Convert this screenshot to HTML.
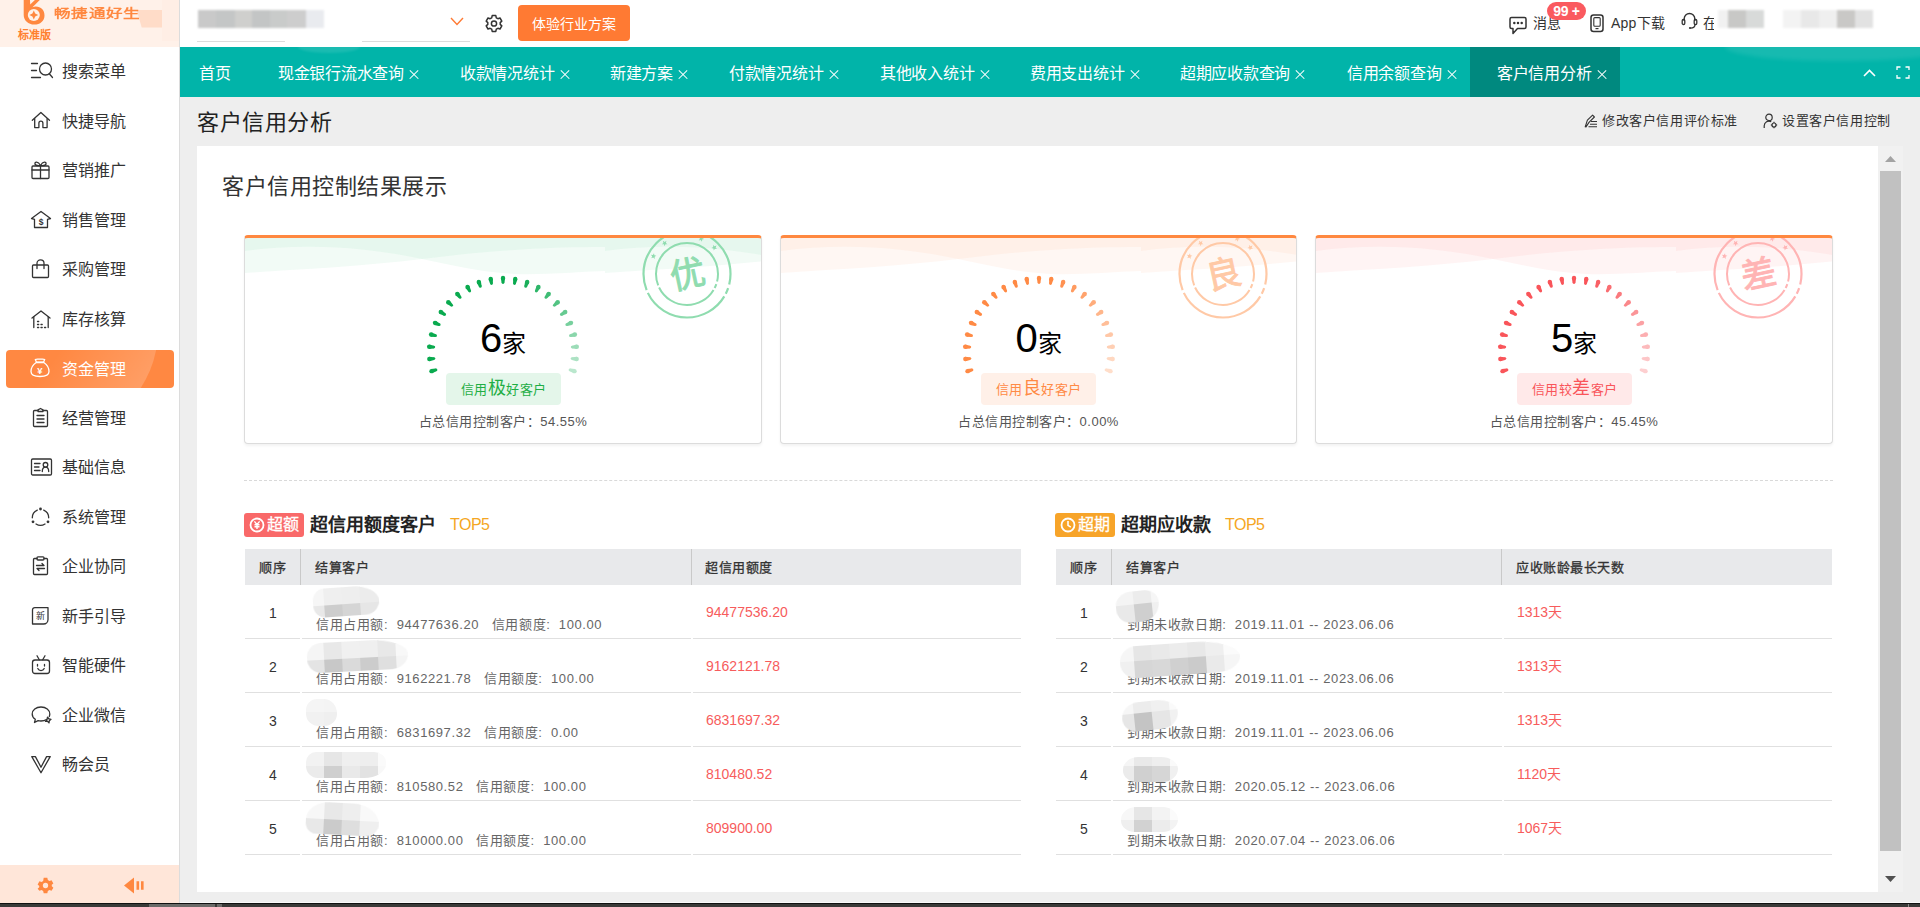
<!DOCTYPE html>
<html lang="zh-CN">
<head>
<meta charset="utf-8">
<title>客户信用分析</title>
<style>
*{box-sizing:border-box;margin:0;padding:0}
html,body{width:1920px;height:907px;overflow:hidden;background:#eeeeee}
body{font-family:"Liberation Sans",sans-serif;font-size:14px;color:#333;position:relative}
.abs{position:absolute}
svg{display:block;overflow:visible}
/* sidebar */
#side{position:absolute;left:0;top:0;width:180px;height:903px;background:#fff;border-right:1px solid #dcdcdc}
#logo{position:absolute;left:0;top:0;width:179px;height:47px;background:#fff1e9;overflow:hidden}
.mi{position:absolute;left:0;width:179px;height:38px}
.mi .ic{position:absolute;left:30px;top:8px;width:22px;height:22px}
.mi .tx{position:absolute;left:62px;top:0;line-height:40px;font-size:16px;color:#333;white-space:nowrap}
.mi.on{left:6px;width:168px;border-radius:4px;background:#ff8842;overflow:hidden}
.mi.on:before{content:"";position:absolute;left:-60px;top:-126px;width:212px;height:212px;border-radius:50%;background:linear-gradient(125deg,rgba(255,255,255,0) 56%,rgba(255,255,255,.21) 90%)}
.mi.on .ic{left:23px;top:7px}
.mi.on .tx{left:56px;color:#fff}
#sfoot{position:absolute;left:0;top:865px;width:179px;height:38px;background:#ffe6d9}
/* header */
#head{position:absolute;left:180px;top:0;width:1740px;height:47px;background:#fff}
#tabs{position:absolute;left:180px;top:47px;width:1740px;height:50px;background:#01b4a9}
.tab{position:absolute;top:0;height:50px;line-height:53px;letter-spacing:-.3px;font-size:16px;color:#fff;white-space:nowrap}
.tab i{position:absolute;top:23px;width:9px;height:9px}
.tab i:before,.tab i:after{content:"";position:absolute;left:-1.5px;top:4px;width:12px;height:1.2px;background:#fff;transform:rotate(45deg)}
.tab i:after{transform:rotate(-45deg)}
.tabon{position:absolute;left:1290px;top:0;width:150px;height:50px;background:#00897f}

#panel{position:absolute;left:197px;top:146px;width:1681px;height:746px;background:#fff}
#sbar{position:absolute;left:1878px;top:146px;width:25px;height:746px;background:#f1f1f1}
#sbar b{position:absolute;left:2px;top:25px;width:21px;height:680px;background:#c1c1c1}
.card{position:absolute;top:89px;height:209px;border:1px solid #dcdcdc;border-top:3px solid #ff8840;border-radius:4px;background:#fff;overflow:hidden;box-shadow:0 2px 3px rgba(0,0,0,.05)}
.card .wave{position:absolute;left:0;top:0;width:100%;height:40px}
.card .num{position:absolute;left:0;width:100%;top:76px;text-align:center;line-height:48px;color:#000;font-size:40px;white-space:nowrap}
.card .num span{font-size:24px}
.card .pill{position:absolute;top:135px;height:32px;width:115px;border-radius:4px;text-align:center;line-height:33px;font-size:13px;letter-spacing:.5px;white-space:nowrap}
.card .pill span{font-size:18px;line-height:20px}
.card .pct{position:absolute;left:0;width:100%;top:174px;text-align:center;font-size:13px;letter-spacing:.5px;line-height:20px;color:#555;white-space:nowrap}
.stamp{position:absolute;top:-12px;width:96px;height:96px}
.sec{position:absolute;top:367px;height:24px}
.badge{position:absolute;left:0;top:0;width:60px;height:24px;border-radius:3px;color:#fff;font-size:16px;line-height:24px;white-space:nowrap}
.badge span{position:absolute;left:23px;top:0;-webkit-text-stroke:.3px #fff}
.sec h3{position:absolute;left:66px;top:-2px;font-size:18px;line-height:28px;font-weight:bold;color:#222;white-space:nowrap}
.sec em{position:absolute;top:0;font-style:normal;letter-spacing:-.5px;font-size:16px;line-height:24px;color:#f5a623;white-space:nowrap}
.tbl{position:absolute;top:403px;width:776px;height:310px}
.th{position:absolute;left:0;top:0;width:100%;height:36px;background:#e8e9eb}
.th span{position:absolute;top:0;line-height:38px;font-size:13px;letter-spacing:.5px;font-weight:normal;-webkit-text-stroke:.3px #333;color:#333;white-space:nowrap}
.th i{position:absolute;top:0;width:1px;height:36px;background:#c9c9c9}
.tr{position:absolute;left:0;width:100%;height:54px;border-bottom:1px solid #e0e0e0}
.tr .gap{position:absolute;bottom:-1px;width:2px;height:1px;background:#fff}
.tr .no{position:absolute;left:0;width:56px;top:18px;text-align:center;font-size:14px;line-height:20px;color:#333}
.tr .sub{position:absolute;top:30px;font-size:13px;letter-spacing:.6px;line-height:20px;color:#666;white-space:pre}
.tr .val{position:absolute;top:17px;font-size:14px;line-height:20px;color:#f75c5c;white-space:nowrap}
.mz{position:absolute;overflow:hidden;filter:blur(.6px)}
.mz i{position:absolute;display:block}
#botbar{position:absolute;left:0;top:903px;width:1920px;height:4px;background:#3a3a38;border-top:1px solid #111}
#botbar b{position:absolute;top:0;height:3px;background:#6b6b69}
</style>
</head>
<body>
<!--SIDEBAR-->
<div id="side">
 <div id="logo"><div class="abs" style="left:162px;top:0;width:17px;height:41px;background:#ffeee5"></div>
<svg class="abs" style="left:136px;top:10px" width="27" height="18" viewBox="0 0 27 18"><path d="M.7 0H26V17.600H5.700z" fill="#ffdcc8"/></svg>
<svg class="abs" style="left:22px;top:-2px" width="24" height="28" viewBox="0 0 24 28"><path d="M1.700 0h6.200l.3 6.500L15 0h4.800L10.500 9.200c1-.4 2.200-.6 3.300-.6 5.300 0 8.700 3.900 8.700 8.800 0 5.200-4.200 9.200-10.200 9.200S1.700 22.500 1.700 17z" fill="#ff8840"/><circle cx="11.800" cy="17" r="6" fill="#fff1e9"/><path d="M11.800 12.600l1.400 3 3 1.400-3 1.400-1.400 3-1.400-3-3-1.400 3-1.400z" fill="#ff8840"/></svg>
<div class="abs" style="left:54px;top:4px;font-size:12px;line-height:20px;font-weight:bold;color:#ff8840;white-space:nowrap;letter-spacing:.5px;transform:scale(1.38,1);transform-origin:0 50%">畅捷通好生</div>
<div class="abs" style="left:18px;top:27px;font-size:11px;line-height:16px;font-weight:bold;color:#ff8030;white-space:nowrap">标准版</div></div>
 <div class="mi" style="top:52px"><svg class="ic" viewBox="0 0 22 22" style="color:#333"><path d="M1.5 3.5h6M1.5 10.5h5M1.5 17.5h9" fill="none" stroke="currentColor" stroke-width="1.3" stroke-linejoin="round" stroke-linecap="round" stroke-width="1.5"/><circle cx="15.5" cy="9" r="6" fill="none" stroke="currentColor" stroke-width="1.3" stroke-linejoin="round" stroke-linecap="round" stroke-width="1.5"/><path d="M19.5 14l3 3.5" fill="none" stroke="currentColor" stroke-width="1.3" stroke-linejoin="round" stroke-linecap="round" stroke-width="1.5"/></svg><div class="tx">搜索菜单</div></div>
<div class="mi" style="top:102px"><svg class="ic" viewBox="0 0 22 22" style="color:#333"><path d="M2.300 10.200L10.900 2.400l8.600 7.800" fill="none" stroke="currentColor" stroke-width="1.3" stroke-linejoin="round" stroke-linecap="round"/><path d="M4.700 8.600v9h4.200v-4.400a2 2 0 0 1 4 0v4.400h4.200v-9" fill="none" stroke="currentColor" stroke-width="1.3" stroke-linejoin="round" stroke-linecap="round"/></svg><div class="tx">快捷导航</div></div>
<div class="mi" style="top:151px"><svg class="ic" viewBox="0 0 22 22" style="color:#333"><rect x="2" y="7" width="17" height="12.5" rx="1" fill="none" stroke="currentColor" stroke-width="1.3" stroke-linejoin="round" stroke-linecap="round"/><path d="M2 11h17M10.5 7v12.5" fill="none" stroke="currentColor" stroke-width="1.3" stroke-linejoin="round" stroke-linecap="round"/><path d="M10.5 6.5C8 2 4.5 2.5 5 5c.3 1.5 3 1.800 5.5 1.500zM10.500 6.500C13 2 16.500 2.500 16 5c-.3 1.500-3 1.800-5.500 1.500z" fill="none" stroke="currentColor" stroke-width="1.3" stroke-linejoin="round" stroke-linecap="round"/></svg><div class="tx">营销推广</div></div>
<div class="mi" style="top:201px"><svg class="ic" viewBox="0 0 22 22" style="color:#333"><path d="M1.500 9.500L11 2.500l9.500 7-3 .8v8.200H4.500v-8.200z" fill="none" stroke="currentColor" stroke-width="1.3" stroke-linejoin="round" stroke-linecap="round"/><text x="11" y="15.500" font-size="8.500" font-weight="bold" text-anchor="middle" fill="currentColor" font-family="Liberation Sans, sans-serif">$</text></svg><div class="tx">销售管理</div></div>
<div class="mi" style="top:250px"><svg class="ic" viewBox="0 0 22 22" style="color:#333"><rect x="2.500" y="7" width="16" height="12.500" rx="1" fill="none" stroke="currentColor" stroke-width="1.3" stroke-linejoin="round" stroke-linecap="round"/><path d="M7 10.500V5.200a3.500 3.300 0 0 1 7 0v5.300" fill="none" stroke="currentColor" stroke-width="1.3" stroke-linejoin="round" stroke-linecap="round"/></svg><div class="tx">采购管理</div></div>
<div class="mi" style="top:300px"><svg class="ic" viewBox="0 0 22 22" style="color:#333"><path d="M2 10L11 3l9 7" fill="none" stroke="currentColor" stroke-width="1.3" stroke-linejoin="round" stroke-linecap="round"/><path d="M3.800 9v10.500M18.200 9v10.500" fill="none" stroke="currentColor" stroke-width="1.3" stroke-linejoin="round" stroke-linecap="round"/><path d="M7.500 13.500h1.200M7.500 16.500h1.200M11 16.500h1.200M7.500 19.500h1.200M11 19.500h1.200M14.500 19.500h1.200" fill="none" stroke="currentColor" stroke-width="1.3" stroke-linejoin="round" stroke-linecap="round" stroke-width="1.600"/></svg><div class="tx">库存核算</div></div>
<div class="mi on" style="top:350px"><svg class="ic" viewBox="0 0 22 22" style="color:#fff"><path d="M7.200 5.500C3.500 8 2 11.500 2 14.500c0 3 2.500 5 9 5s9-2 9-5c0-3-1.500-6.500-5.200-9z" fill="none" stroke="currentColor" stroke-width="1.3" stroke-linejoin="round" stroke-linecap="round" stroke-width="1.500"/><path d="M7.500 5.200L6.300 2.500c1.500-.8 3-.3 4.700-.3s3.200-.5 4.700.3l-1.200 2.700z" fill="none" stroke="currentColor" stroke-width="1.3" stroke-linejoin="round" stroke-linecap="round" stroke-width="1.500"/><text x="11" y="17" font-size="9.5" font-weight="bold" text-anchor="middle" fill="currentColor" font-family="Liberation Sans, sans-serif">¥</text></svg><div class="tx">资金管理</div></div>
<div class="mi" style="top:399px"><svg class="ic" viewBox="0 0 22 22" style="color:#333"><path d="M8 3.500H4.500a1 1 0 0 0-1 1v14a1 1 0 0 0 1 1h12a1 1 0 0 0 1-1v-14a1 1 0 0 0-1-1H13" fill="none" stroke="currentColor" stroke-width="1.3" stroke-linejoin="round" stroke-linecap="round"/><path d="M8 4.500V2.800l2.500-1.300L13 2.800v1.700z" fill="none" stroke="currentColor" stroke-width="1.3" stroke-linejoin="round" stroke-linecap="round"/><path d="M7 8.500h7M7 12h7M7 15.500h7" fill="none" stroke="currentColor" stroke-width="1.3" stroke-linejoin="round" stroke-linecap="round"/></svg><div class="tx">经营管理</div></div>
<div class="mi" style="top:448px"><svg class="ic" viewBox="0 0 22 22" style="color:#333"><rect x="1.500" y="3" width="20" height="16" rx="1.200" fill="none" stroke="currentColor" stroke-width="1.3" stroke-linejoin="round" stroke-linecap="round"/><path d="M4.500 7.500h5.500M4.500 11h4.500M4.500 14.500h5.500" fill="none" stroke="currentColor" stroke-width="1.3" stroke-linejoin="round" stroke-linecap="round"/><circle cx="15.500" cy="8.800" r="2.300" fill="none" stroke="currentColor" stroke-width="1.3" stroke-linejoin="round" stroke-linecap="round"/><path d="M12.300 15.500c0-3 1.400-4.300 3.200-4.300s3.200 1.300 3.200 4.300" fill="none" stroke="currentColor" stroke-width="1.3" stroke-linejoin="round" stroke-linecap="round"/></svg><div class="tx">基础信息</div></div>
<div class="mi" style="top:498px"><svg class="ic" viewBox="0 0 22 22" style="color:#333"><path d="M7.300 4.100A8.300 8.300 0 0 0 2.300 11.800M18.700 11.800a8.300 8.300 0 0 0-5-7.700M6 18a8.300 8.300 0 0 0 9 0" fill="none" stroke="currentColor" stroke-width="1.3" stroke-linejoin="round" stroke-linecap="round"/><circle cx="10.500" cy="3" r="1.400" fill="currentColor"/><circle cx="3" cy="15.800" r="1.400" fill="currentColor"/><circle cx="18" cy="15.800" r="1.400" fill="currentColor"/></svg><div class="tx">系统管理</div></div>
<div class="mi" style="top:547px"><svg class="ic" viewBox="0 0 22 22" style="color:#333"><path d="M7 3.500H4.500a1 1 0 0 0-1 1v14a1 1 0 0 0 1 1h12a1 1 0 0 0 1-1v-14a1 1 0 0 0-1-1H14" fill="none" stroke="currentColor" stroke-width="1.3" stroke-linejoin="round" stroke-linecap="round"/><rect x="7" y="1.800" width="7" height="3.200" rx="1" fill="none" stroke="currentColor" stroke-width="1.3" stroke-linejoin="round" stroke-linecap="round"/><path d="M6.500 10.500h7.500M14.500 13.500H7M12 8.500l2 2M9 15.500l-2-2" fill="none" stroke="currentColor" stroke-width="1.3" stroke-linejoin="round" stroke-linecap="round"/></svg><div class="tx">企业协同</div></div>
<div class="mi" style="top:597px"><svg class="ic" viewBox="0 0 22 22" style="color:#333"><path d="M4.800 2.600h13.200V14.500a4.500 4.500 0 0 1-4.500 4.500H2.500V4.900a2.300 2.300 0 0 1 2.300-2.300z" fill="none" stroke="currentColor" stroke-width="1.3" stroke-linejoin="round" stroke-linecap="round" stroke-width="1.100"/><text x="10.300" y="14.200" font-size="9" text-anchor="middle" fill="currentColor" font-family="Liberation Sans, sans-serif">新</text></svg><div class="tx">新手引导</div></div>
<div class="mi" style="top:646px"><svg class="ic" viewBox="0 0 22 22" style="color:#333"><rect x="2.500" y="6" width="17" height="13.500" rx="2.500" fill="none" stroke="currentColor" stroke-width="1.3" stroke-linejoin="round" stroke-linecap="round"/><path d="M7 1.800l2.300 4M15 1.800l-2.300 4" fill="none" stroke="currentColor" stroke-width="1.3" stroke-linejoin="round" stroke-linecap="round"/><path d="M7.500 10.500v1.500M14.500 10.500v1.500" fill="none" stroke="currentColor" stroke-width="1.3" stroke-linejoin="round" stroke-linecap="round" stroke-width="1.500"/><path d="M7.800 14.500a3.500 3.500 0 0 0 6.400 0" fill="none" stroke="currentColor" stroke-width="1.3" stroke-linejoin="round" stroke-linecap="round"/></svg><div class="tx">智能硬件</div></div>
<div class="mi" style="top:696px"><svg class="ic" viewBox="0 0 22 22" style="color:#333"><path d="M16.500 15.500c-1.500 1-3.300 1.500-5.500 1.500-1 0-2-.1-2.900-.4L4.500 18.500l.8-3.200C3.300 14 2.200 12.200 2.200 10 2.200 6 6 3 11 3s8.800 3 8.800 7c0 .9-.2 1.700-.5 2.500" fill="none" stroke="currentColor" stroke-width="1.3" stroke-linejoin="round" stroke-linecap="round"/><path d="M17.500 13.200l1.600 1.800 1.900.3-1.700 1.500-.3 2-1.500-1.600-2 .2 1.500-1.800z" fill="none" stroke="currentColor" stroke-width="1.3" stroke-linejoin="round" stroke-linecap="round" stroke-width="1.100"/></svg><div class="tx">企业微信</div></div>
<div class="mi" style="top:745px"><svg class="ic" viewBox="0 0 22 22" style="color:#333"><path d="M1.800 3.600h3.600M16.600 3.600h3.600M1.800 3.600L11 19.800 20.200 3.600M5.400 3.600L11 14.200 16.600 3.600" fill="none" stroke="currentColor" stroke-width="1.3" stroke-linejoin="round" stroke-linecap="round" stroke-width="1.200"/></svg><div class="tx">畅会员</div></div>

 <div id="sfoot"><svg class="abs" style="left:36.500px;top:12px" width="17" height="17" viewBox="0 0 16 16"><path d="M6.300 .8h3.400l.5 2 1.500.9 2-.6 1.700 2.900-1.500 1.400v1.200l1.500 1.400-1.700 2.900-2-.6-1.500.9-.5 2H6.300l-.5-2-1.500-.9-2 .6L.6 11.100l1.500-1.400V8.500L.6 7l1.700-2.900 2 .6 1.500-.9z" fill="#ff8840"/><circle cx="8" cy="8" r="2.500" fill="#ffe6d9"/></svg>
<svg class="abs" style="left:123px;top:12px" width="22" height="17" viewBox="0 0 22 16" preserveAspectRatio="none"><path d="M1 8L11 .5v15z" fill="#ff8840"/><rect x="13.500" y="4" width="2.600" height="8" fill="#ff8840"/><rect x="18" y="4" width="2.600" height="8" fill="#ff8840"/></svg></div>
</div>
<!--HEADER-->
<div id="head">
 <!-- blurred company name -->
 <div class="abs" style="left:18px;top:10px;width:126px;height:18px;filter:blur(1.2px);background:linear-gradient(90deg,#c9c9c9 0,#c9c9c9 14%,#c4c6c6 14%,#c4c6c6 29%,#cfcfcd 29%,#cfcfcd 43%,#c3c5c5 43%,#c3c5c5 57%,#c9cbca 57%,#c9cbca 71%,#cdcdcd 71%,#cdcdcd 86%,#e9ebef 86%,#e9ebef 100%)"></div>
 <div class="abs" style="left:17px;top:41px;width:88px;height:1px;background:#dcdcdc"></div>
 <div class="abs" style="left:182px;top:41px;width:108px;height:1px;background:#dcdcdc"></div>
 <svg class="abs" style="left:270px;top:17px" width="14" height="9" viewBox="0 0 14 9"><path d="M1 1 L7 7.5 L13 1" fill="none" stroke="#ff7a33" stroke-width="1.4"/></svg>
 <svg class="abs" style="left:304px;top:14px" width="20" height="20" viewBox="0 0 20 20"><path d="M8.2 1.6h3.6l.5 2.2 1.6.9 2.1-.7 1.8 3.1-1.6 1.5v1.8l1.6 1.5-1.8 3.1-2.1-.7-1.6.9-.5 2.2H8.2l-.5-2.2-1.6-.9-2.1.7-1.8-3.1 1.6-1.5V8.6L2.2 7.1 4 4l2.1.7 1.6-.9z" fill="none" stroke="#333" stroke-width="1.5" stroke-linejoin="round"/><circle cx="10" cy="9.5" r="2.6" fill="none" stroke="#333" stroke-width="1.5"/></svg>
 <div class="abs" style="left:338px;top:5px;width:112px;height:36px;border-radius:4px;background:#ff7a33;color:#fff;font-size:14px;line-height:38px;text-align:center">体验行业方案</div>
 <!-- right -->
 <svg class="abs" style="left:1328px;top:14px" width="20" height="22" viewBox="0 0 20 22"><path d="M3.500 3.500h13a1.500 1.500 0 0 1 1.500 1.500v8a1.500 1.500 0 0 1-1.500 1.500H9.500L5 19.500V14.500H3.500A1.500 1.500 0 0 1 2 13V5a1.500 1.500 0 0 1 1.500-1.500z" fill="none" stroke="#333" stroke-width="1.500" stroke-linejoin="round"/><circle cx="6.300" cy="9" r="1.250" fill="#333"/><circle cx="10" cy="9" r="1.250" fill="#333"/><circle cx="13.700" cy="9" r="1.250" fill="#333"/></svg>
 <div class="abs" style="left:1353px;top:13px;font-size:14px;line-height:20px;color:#333">消息</div>
 <div class="abs" style="left:1367px;top:2px;width:39px;height:18px;border-radius:9px;background:#fa5a5f;color:#fff;font-size:14px;letter-spacing:-.3px;font-weight:bold;line-height:18px;text-align:center">99 +</div>
 <svg class="abs" style="left:1410px;top:14px" width="14" height="19" viewBox="0 0 14 19"><rect x="1" y="1" width="12" height="16.500" rx="2.500" fill="none" stroke="#333" stroke-width="1.500"/><rect x="3.800" y="3.600" width="6.400" height="8.600" rx="1" fill="none" stroke="#333" stroke-width="1.100"/><path d="M5.500 14.600h3" stroke="#333" stroke-width="1.200"/></svg>
 <div class="abs" style="left:1431px;top:13px;font-size:14px;line-height:20px;color:#333;letter-spacing:.2px">App下载</div>
 <svg class="abs" style="left:1501px;top:12px" width="17" height="18" viewBox="0 0 17 18"><path d="M3.2 9V6.8a5.3 5.3 0 0 1 10.6 0V9" fill="none" stroke="#333" stroke-width="1.4"/><rect x="1.2" y="7.5" width="2.6" height="5" rx="1.2" fill="none" stroke="#333" stroke-width="1.3"/><rect x="13.2" y="7.5" width="2.6" height="5" rx="1.2" fill="none" stroke="#333" stroke-width="1.3"/><path d="M14 12.5c0 2.5-2 3.6-4.6 3.6" fill="none" stroke="#333" stroke-width="1.3"/><circle cx="9" cy="16" r="1.1" fill="#333"/></svg>
 <div class="abs" style="left:1523px;top:13px;font-size:14px;line-height:20px;color:#333">在</div>
 <!-- blurred user area -->
 <div class="abs" style="left:1534px;top:0;width:206px;height:47px;background:#fff"></div>
 <div class="abs" style="left:1538px;top:10px;width:46px;height:18px;filter:blur(1px);background:linear-gradient(90deg,#f1f1f1 0,#f1f1f1 22%,#c8c8c6 22%,#c8c8c6 61%,#d8dad9 61%,#d8dad9 100%)"></div>
 <div class="abs" style="left:1603px;top:10px;width:90px;height:18px;filter:blur(1px);background:linear-gradient(90deg,#f3f3f3 0,#f3f3f3 20%,#e8e8e8 20%,#e8e8e8 40%,#efefef 40%,#efefef 60%,#c9c8c6 60%,#c9c8c6 80%,#e2e2e2 80%,#e2e2e2 100%)"></div>
</div>
<div id="tabs">
 <div class="tabon"></div>
 <div class="abs" style="left:118px;top:-6px;width:62px;height:12px;border-radius:50%;background:rgba(255,255,255,.1);filter:blur(1px)"></div>
 <div class="abs" style="left:1545px;top:-14px;width:230px;height:28px;border-radius:50%;background:rgba(255,255,255,.09);filter:blur(2px)"></div>
 <div class="tab" style="left:19px">首页</div>
<div class="tab" style="left:98px">现金银行流水查询<i style="left:131px"></i></div>
<div class="tab" style="left:280px">收款情况统计<i style="left:100px"></i></div>
<div class="tab" style="left:430px">新建方案<i style="left:68px"></i></div>
<div class="tab" style="left:549px">付款情况统计<i style="left:100px"></i></div>
<div class="tab" style="left:700px">其他收入统计<i style="left:100px"></i></div>
<div class="tab" style="left:850px">费用支出统计<i style="left:100px"></i></div>
<div class="tab" style="left:1000px">超期应收款查询<i style="left:115px"></i></div>
<div class="tab" style="left:1167px">信用余额查询<i style="left:100px"></i></div>
<div class="tab" style="left:1317px">客户信用分析<i style="left:100px"></i></div>
<svg class="abs" style="left:1683px;top:22px" width="13" height="8" viewBox="0 0 13 8"><path d="M1 7 L6.5 1.5 L12 7" fill="none" stroke="#fff" stroke-width="1.6"/></svg>
<svg class="abs" style="left:1716px;top:19px" width="14" height="13" viewBox="0 0 14 13"><path d="M1 4V1h3.5M9.5 1H13v3M13 9v3H9.5M4.5 12H1V9" fill="none" stroke="#fff" stroke-width="1.3"/></svg>

</div>
<div class="abs" style="left:197px;top:107px;font-size:22px;letter-spacing:.5px;line-height:32px;color:#222;white-space:nowrap">客户信用分析</div>
<svg class="abs" style="left:1584px;top:114px" width="14" height="14" viewBox="0 0 14 14"><path d="M1.2 12.8 L3.4 6.2 L8.6 1.2 L10.4 3 L5 8.4 L2 12.9z" fill="none" stroke="#333" stroke-width="1.1" stroke-linejoin="round"/><path d="M7 7.5h6M6 10.2h7M4.5 12.8H13" stroke="#333" stroke-width="1.1"/></svg>
<div class="abs" style="left:1602px;top:111px;font-size:13px;letter-spacing:.6px;line-height:20px;color:#333;white-space:nowrap">修改客户信用评价标准</div>
<svg class="abs" style="left:1763px;top:113px" width="15" height="16" viewBox="0 0 15 16"><circle cx="6" cy="4.4" r="3.2" fill="none" stroke="#333" stroke-width="1.2"/><path d="M1.2 15v-2.2a4.8 4.8 0 0 1 7-4.2" fill="none" stroke="#333" stroke-width="1.2"/><circle cx="11" cy="12" r="2" fill="none" stroke="#333" stroke-width="1.2"/><path d="M11 8.8v1.2M11 14v1.2M7.8 12H9M13 12h1.2" stroke="#333" stroke-width="1.1"/></svg>
<div class="abs" style="left:1782px;top:111px;font-size:13px;letter-spacing:.6px;line-height:20px;color:#333;white-space:nowrap">设置客户信用控制</div>

<div id="panel">
<div class="abs" style="left:25px;top:25px;font-size:22px;letter-spacing:.5px;line-height:32px;color:#333;white-space:nowrap">客户信用控制结果展示</div>
<div class="card" style="left:47px;width:518px"><svg class="wave" preserveAspectRatio="none"><defs><pattern id="w2ebe64" width="360" height="40" patternUnits="userSpaceOnUse"><path d="M0,0H360V9C300,9 250,12 177,21C120,28 60,31 0,35Z" fill="#18b256" opacity=".056"/><path d="M0,0H360V33C330,34 300,37 270,36C235,34 205,27 177,21C120,9 60,5 0,13Z" fill="#18b256" opacity=".056"/></pattern></defs><rect width="100%" height="40" fill="url(#w2ebe64)"/></svg><svg class="stamp" style="left:394px" viewBox="0 0 96 96"><circle cx="48" cy="48" r="43.5" fill="none" stroke="#8fdcaf" stroke-width="2.2" stroke-dasharray="10.6 3.8 6.1 3 93.4 3 154"/><circle cx="48" cy="48" r="31" fill="none" stroke="#8fdcaf" stroke-width="2" stroke-dasharray="7.6 2.7 4.3 2.2 66.5 2.2 110"/><polygon points="11.8,28.8 13.9,29.0 15.0,27.2 15.4,29.3 17.4,29.7 15.6,30.8 15.8,32.9 14.2,31.4 12.3,32.2 13.2,30.3" fill="#8fdcaf"/><polygon points="23.9,14.8 25.7,16.0 27.4,14.8 26.9,16.9 28.5,18.2 26.4,18.3 25.7,20.3 24.9,18.3 22.8,18.2 24.4,16.9" fill="#8fdcaf"/><polygon points="63.4,10.0 63.3,12.1 65.2,13.0 63.2,13.6 63.0,15.7 61.7,14.0 59.7,14.4 60.9,12.7 59.9,10.8 61.9,11.5" fill="#8fdcaf"/><polygon points="77.5,19.5 76.6,21.4 78.0,23.0 75.9,22.8 74.8,24.6 74.4,22.5 72.4,22.0 74.2,21.0 74.0,18.9 75.6,20.3" fill="#8fdcaf"/><text x="48" y="61" text-anchor="middle" font-size="35" stroke-width=".9" paint-order="stroke" stroke="#8fdcaf" fill="#8fdcaf" transform="rotate(-12 48 48)" font-family="Liberation Sans, sans-serif">优</text></svg><svg class="abs" style="left:178px;top:34px" width="160" height="110" viewBox="0 0 160 110"><g opacity="0.28" fill="#0aaa4f"><polygon points="150.91,101.28 152.05,97.03 147.40,96.61 146.67,99.31"/><circle cx="151.48" cy="99.15" r="2.20"/><circle cx="147.04" cy="97.96" r="1.40"/></g><g opacity="0.33" fill="#0aaa4f"><polygon points="153.46,89.22 153.87,84.84 149.22,85.20 148.95,87.99"/><circle cx="153.66" cy="87.03" r="2.20"/><circle cx="149.09" cy="86.60" r="1.40"/></g><g opacity="0.40" fill="#0aaa4f"><polygon points="153.97,76.92 153.65,72.53 149.12,73.65 149.32,76.45"/><circle cx="153.81" cy="74.72" r="2.20"/><circle cx="149.22" cy="75.05" r="1.40"/></g><g opacity="0.47" fill="#0aaa4f"><polygon points="152.43,64.69 151.40,60.42 147.11,62.28 147.77,65.00"/><circle cx="151.91" cy="62.55" r="2.20"/><circle cx="147.44" cy="63.64" r="1.40"/></g><g opacity="0.55" fill="#0aaa4f"><polygon points="148.89,52.89 147.16,48.85 143.25,51.39 144.35,53.97"/><circle cx="148.03" cy="50.87" r="2.20"/><circle cx="143.80" cy="52.68" r="1.40"/></g><g opacity="0.62" fill="#0aaa4f"><polygon points="143.44,41.84 141.06,38.14 137.63,41.30 139.14,43.66"/><circle cx="142.25" cy="39.99" r="2.20"/><circle cx="138.38" cy="42.48" r="1.40"/></g><g opacity="0.70" fill="#0aaa4f"><polygon points="136.24,31.85 133.28,28.60 130.41,32.28 132.29,34.35"/><circle cx="134.76" cy="30.22" r="2.20"/><circle cx="131.35" cy="33.32" r="1.40"/></g><g opacity="0.78" fill="#0aaa4f"><polygon points="127.47,23.19 124.01,20.47 121.80,24.58 124.00,26.31"/><circle cx="125.74" cy="21.83" r="2.20"/><circle cx="122.90" cy="25.45" r="1.40"/></g><g opacity="0.85" fill="#0aaa4f"><polygon points="117.40,16.11 113.53,14.00 112.03,18.42 114.49,19.76"/><circle cx="115.46" cy="15.05" r="2.20"/><circle cx="113.26" cy="19.09" r="1.40"/></g><g opacity="0.93" fill="#0aaa4f"><polygon points="106.28,10.79 102.12,9.35 101.38,13.96 104.02,14.87"/><circle cx="104.20" cy="10.07" r="2.20"/><circle cx="102.70" cy="14.42" r="1.40"/></g><g opacity="1.00" fill="#0aaa4f"><polygon points="94.44,7.39 90.10,6.66 90.13,11.33 92.89,11.79"/><circle cx="92.27" cy="7.02" r="2.20"/><circle cx="91.51" cy="11.56" r="1.40"/></g><g opacity="1.00" fill="#0aaa4f"><polygon points="82.20,6.00 77.80,6.00 78.60,10.60 81.40,10.60"/><circle cx="80.00" cy="6.00" r="2.20"/><circle cx="80.00" cy="10.60" r="1.40"/></g><g opacity="1.00" fill="#0aaa4f"><polygon points="69.90,6.66 65.56,7.39 67.11,11.79 69.87,11.33"/><circle cx="67.73" cy="7.02" r="2.20"/><circle cx="68.49" cy="11.56" r="1.40"/></g><g opacity="1.00" fill="#0aaa4f"><polygon points="57.88,9.35 53.72,10.79 55.98,14.87 58.62,13.96"/><circle cx="55.80" cy="10.07" r="2.20"/><circle cx="57.30" cy="14.42" r="1.40"/></g><g opacity="1.00" fill="#0aaa4f"><polygon points="46.47,14.00 42.60,16.11 45.51,19.76 47.97,18.42"/><circle cx="44.54" cy="15.05" r="2.20"/><circle cx="46.74" cy="19.09" r="1.40"/></g><g opacity="1.00" fill="#0aaa4f"><polygon points="35.99,20.47 32.53,23.19 36.00,26.31 38.20,24.58"/><circle cx="34.26" cy="21.83" r="2.20"/><circle cx="37.10" cy="25.45" r="1.40"/></g><g opacity="1.00" fill="#0aaa4f"><polygon points="26.72,28.60 23.76,31.85 27.71,34.35 29.59,32.28"/><circle cx="25.24" cy="30.22" r="2.20"/><circle cx="28.65" cy="33.32" r="1.40"/></g><g opacity="1.00" fill="#0aaa4f"><polygon points="18.94,38.14 16.56,41.84 20.86,43.66 22.37,41.30"/><circle cx="17.75" cy="39.99" r="2.20"/><circle cx="21.62" cy="42.48" r="1.40"/></g><g opacity="1.00" fill="#0aaa4f"><polygon points="12.84,48.85 11.11,52.89 15.65,53.97 16.75,51.39"/><circle cx="11.97" cy="50.87" r="2.20"/><circle cx="16.20" cy="52.68" r="1.40"/></g><g opacity="1.00" fill="#0aaa4f"><polygon points="8.60,60.42 7.57,64.69 12.23,65.00 12.89,62.28"/><circle cx="8.09" cy="62.55" r="2.20"/><circle cx="12.56" cy="63.64" r="1.40"/></g><g opacity="1.00" fill="#0aaa4f"><polygon points="6.35,72.53 6.03,76.92 10.68,76.45 10.88,73.65"/><circle cx="6.19" cy="74.72" r="2.20"/><circle cx="10.78" cy="75.05" r="1.40"/></g><g opacity="1.00" fill="#0aaa4f"><polygon points="6.13,84.84 6.54,89.22 11.05,87.99 10.78,85.20"/><circle cx="6.34" cy="87.03" r="2.20"/><circle cx="10.91" cy="86.60" r="1.40"/></g><g opacity="1.00" fill="#0aaa4f"><polygon points="7.95,97.03 9.09,101.28 13.33,99.31 12.60,96.61"/><circle cx="8.52" cy="99.15" r="2.20"/><circle cx="12.96" cy="97.96" r="1.40"/></g></svg><div class="num">6<span>家</span></div><div class="pill" style="left:201px;background:#e4f6ea;color:#1fae45">信用<span>极</span>好客户</div><div class="pct">占总信用控制客户：54.55%</div></div>
<div class="card" style="left:583px;width:517px"><svg class="wave" preserveAspectRatio="none"><defs><pattern id="wff8a45" width="360" height="40" patternUnits="userSpaceOnUse"><path d="M0,0H360V9C300,9 250,12 177,21C120,28 60,31 0,35Z" fill="#ff6e1e" opacity=".056"/><path d="M0,0H360V33C330,34 300,37 270,36C235,34 205,27 177,21C120,9 60,5 0,13Z" fill="#ff6e1e" opacity=".056"/></pattern></defs><rect width="100%" height="40" fill="url(#wff8a45)"/></svg><svg class="stamp" style="left:394px" viewBox="0 0 96 96"><circle cx="48" cy="48" r="43.5" fill="none" stroke="#ffc9a6" stroke-width="2.2" stroke-dasharray="10.6 3.8 6.1 3 93.4 3 154"/><circle cx="48" cy="48" r="31" fill="none" stroke="#ffc9a6" stroke-width="2" stroke-dasharray="7.6 2.7 4.3 2.2 66.5 2.2 110"/><polygon points="11.8,28.8 13.9,29.0 15.0,27.2 15.4,29.3 17.4,29.7 15.6,30.8 15.8,32.9 14.2,31.4 12.3,32.2 13.2,30.3" fill="#ffc9a6"/><polygon points="23.9,14.8 25.7,16.0 27.4,14.8 26.9,16.9 28.5,18.2 26.4,18.3 25.7,20.3 24.9,18.3 22.8,18.2 24.4,16.9" fill="#ffc9a6"/><polygon points="63.4,10.0 63.3,12.1 65.2,13.0 63.2,13.6 63.0,15.7 61.7,14.0 59.7,14.4 60.9,12.7 59.9,10.8 61.9,11.5" fill="#ffc9a6"/><polygon points="77.5,19.5 76.6,21.4 78.0,23.0 75.9,22.8 74.8,24.6 74.4,22.5 72.4,22.0 74.2,21.0 74.0,18.9 75.6,20.3" fill="#ffc9a6"/><text x="48" y="61" text-anchor="middle" font-size="35" stroke-width=".9" paint-order="stroke" stroke="#ffc9a6" fill="#ffc9a6" transform="rotate(-12 48 48)" font-family="Liberation Sans, sans-serif">良</text></svg><svg class="abs" style="left:178px;top:34px" width="160" height="110" viewBox="0 0 160 110"><g opacity="0.28" fill="#ff8a45"><polygon points="150.91,101.28 152.05,97.03 147.40,96.61 146.67,99.31"/><circle cx="151.48" cy="99.15" r="2.20"/><circle cx="147.04" cy="97.96" r="1.40"/></g><g opacity="0.33" fill="#ff8a45"><polygon points="153.46,89.22 153.87,84.84 149.22,85.20 148.95,87.99"/><circle cx="153.66" cy="87.03" r="2.20"/><circle cx="149.09" cy="86.60" r="1.40"/></g><g opacity="0.40" fill="#ff8a45"><polygon points="153.97,76.92 153.65,72.53 149.12,73.65 149.32,76.45"/><circle cx="153.81" cy="74.72" r="2.20"/><circle cx="149.22" cy="75.05" r="1.40"/></g><g opacity="0.47" fill="#ff8a45"><polygon points="152.43,64.69 151.40,60.42 147.11,62.28 147.77,65.00"/><circle cx="151.91" cy="62.55" r="2.20"/><circle cx="147.44" cy="63.64" r="1.40"/></g><g opacity="0.55" fill="#ff8a45"><polygon points="148.89,52.89 147.16,48.85 143.25,51.39 144.35,53.97"/><circle cx="148.03" cy="50.87" r="2.20"/><circle cx="143.80" cy="52.68" r="1.40"/></g><g opacity="0.62" fill="#ff8a45"><polygon points="143.44,41.84 141.06,38.14 137.63,41.30 139.14,43.66"/><circle cx="142.25" cy="39.99" r="2.20"/><circle cx="138.38" cy="42.48" r="1.40"/></g><g opacity="0.70" fill="#ff8a45"><polygon points="136.24,31.85 133.28,28.60 130.41,32.28 132.29,34.35"/><circle cx="134.76" cy="30.22" r="2.20"/><circle cx="131.35" cy="33.32" r="1.40"/></g><g opacity="0.78" fill="#ff8a45"><polygon points="127.47,23.19 124.01,20.47 121.80,24.58 124.00,26.31"/><circle cx="125.74" cy="21.83" r="2.20"/><circle cx="122.90" cy="25.45" r="1.40"/></g><g opacity="0.85" fill="#ff8a45"><polygon points="117.40,16.11 113.53,14.00 112.03,18.42 114.49,19.76"/><circle cx="115.46" cy="15.05" r="2.20"/><circle cx="113.26" cy="19.09" r="1.40"/></g><g opacity="0.93" fill="#ff8a45"><polygon points="106.28,10.79 102.12,9.35 101.38,13.96 104.02,14.87"/><circle cx="104.20" cy="10.07" r="2.20"/><circle cx="102.70" cy="14.42" r="1.40"/></g><g opacity="1.00" fill="#ff8a45"><polygon points="94.44,7.39 90.10,6.66 90.13,11.33 92.89,11.79"/><circle cx="92.27" cy="7.02" r="2.20"/><circle cx="91.51" cy="11.56" r="1.40"/></g><g opacity="1.00" fill="#ff8a45"><polygon points="82.20,6.00 77.80,6.00 78.60,10.60 81.40,10.60"/><circle cx="80.00" cy="6.00" r="2.20"/><circle cx="80.00" cy="10.60" r="1.40"/></g><g opacity="1.00" fill="#ff8a45"><polygon points="69.90,6.66 65.56,7.39 67.11,11.79 69.87,11.33"/><circle cx="67.73" cy="7.02" r="2.20"/><circle cx="68.49" cy="11.56" r="1.40"/></g><g opacity="1.00" fill="#ff8a45"><polygon points="57.88,9.35 53.72,10.79 55.98,14.87 58.62,13.96"/><circle cx="55.80" cy="10.07" r="2.20"/><circle cx="57.30" cy="14.42" r="1.40"/></g><g opacity="1.00" fill="#ff8a45"><polygon points="46.47,14.00 42.60,16.11 45.51,19.76 47.97,18.42"/><circle cx="44.54" cy="15.05" r="2.20"/><circle cx="46.74" cy="19.09" r="1.40"/></g><g opacity="1.00" fill="#ff8a45"><polygon points="35.99,20.47 32.53,23.19 36.00,26.31 38.20,24.58"/><circle cx="34.26" cy="21.83" r="2.20"/><circle cx="37.10" cy="25.45" r="1.40"/></g><g opacity="1.00" fill="#ff8a45"><polygon points="26.72,28.60 23.76,31.85 27.71,34.35 29.59,32.28"/><circle cx="25.24" cy="30.22" r="2.20"/><circle cx="28.65" cy="33.32" r="1.40"/></g><g opacity="1.00" fill="#ff8a45"><polygon points="18.94,38.14 16.56,41.84 20.86,43.66 22.37,41.30"/><circle cx="17.75" cy="39.99" r="2.20"/><circle cx="21.62" cy="42.48" r="1.40"/></g><g opacity="1.00" fill="#ff8a45"><polygon points="12.84,48.85 11.11,52.89 15.65,53.97 16.75,51.39"/><circle cx="11.97" cy="50.87" r="2.20"/><circle cx="16.20" cy="52.68" r="1.40"/></g><g opacity="1.00" fill="#ff8a45"><polygon points="8.60,60.42 7.57,64.69 12.23,65.00 12.89,62.28"/><circle cx="8.09" cy="62.55" r="2.20"/><circle cx="12.56" cy="63.64" r="1.40"/></g><g opacity="1.00" fill="#ff8a45"><polygon points="6.35,72.53 6.03,76.92 10.68,76.45 10.88,73.65"/><circle cx="6.19" cy="74.72" r="2.20"/><circle cx="10.78" cy="75.05" r="1.40"/></g><g opacity="1.00" fill="#ff8a45"><polygon points="6.13,84.84 6.54,89.22 11.05,87.99 10.78,85.20"/><circle cx="6.34" cy="87.03" r="2.20"/><circle cx="10.91" cy="86.60" r="1.40"/></g><g opacity="1.00" fill="#ff8a45"><polygon points="7.95,97.03 9.09,101.28 13.33,99.31 12.60,96.61"/><circle cx="8.52" cy="99.15" r="2.20"/><circle cx="12.96" cy="97.96" r="1.40"/></g></svg><div class="num">0<span>家</span></div><div class="pill" style="left:200px;background:#fff0e8;color:#ff8a45">信用<span>良</span>好客户</div><div class="pct">占总信用控制客户：0.00%</div></div>
<div class="card" style="left:1118px;width:518px"><svg class="wave" preserveAspectRatio="none"><defs><pattern id="wf9555a" width="360" height="40" patternUnits="userSpaceOnUse"><path d="M0,0H360V9C300,9 250,12 177,21C120,28 60,31 0,35Z" fill="#ff3c3c" opacity=".056"/><path d="M0,0H360V33C330,34 300,37 270,36C235,34 205,27 177,21C120,9 60,5 0,13Z" fill="#ff3c3c" opacity=".056"/></pattern></defs><rect width="100%" height="40" fill="url(#wf9555a)"/></svg><svg class="stamp" style="left:394px" viewBox="0 0 96 96"><circle cx="48" cy="48" r="43.5" fill="none" stroke="#ffb4b4" stroke-width="2.2" stroke-dasharray="10.6 3.8 6.1 3 93.4 3 154"/><circle cx="48" cy="48" r="31" fill="none" stroke="#ffb4b4" stroke-width="2" stroke-dasharray="7.6 2.7 4.3 2.2 66.5 2.2 110"/><polygon points="11.8,28.8 13.9,29.0 15.0,27.2 15.4,29.3 17.4,29.7 15.6,30.8 15.8,32.9 14.2,31.4 12.3,32.2 13.2,30.3" fill="#ffb4b4"/><polygon points="23.9,14.8 25.7,16.0 27.4,14.8 26.9,16.9 28.5,18.2 26.4,18.3 25.7,20.3 24.9,18.3 22.8,18.2 24.4,16.9" fill="#ffb4b4"/><polygon points="63.4,10.0 63.3,12.1 65.2,13.0 63.2,13.6 63.0,15.7 61.7,14.0 59.7,14.4 60.9,12.7 59.9,10.8 61.9,11.5" fill="#ffb4b4"/><polygon points="77.5,19.5 76.6,21.4 78.0,23.0 75.9,22.8 74.8,24.6 74.4,22.5 72.4,22.0 74.2,21.0 74.0,18.9 75.6,20.3" fill="#ffb4b4"/><text x="48" y="61" text-anchor="middle" font-size="35" stroke-width=".9" paint-order="stroke" stroke="#ffb4b4" fill="#ffb4b4" transform="rotate(-12 48 48)" font-family="Liberation Sans, sans-serif">差</text></svg><svg class="abs" style="left:178px;top:34px" width="160" height="110" viewBox="0 0 160 110"><g opacity="0.28" fill="#f9555a"><polygon points="150.91,101.28 152.05,97.03 147.40,96.61 146.67,99.31"/><circle cx="151.48" cy="99.15" r="2.20"/><circle cx="147.04" cy="97.96" r="1.40"/></g><g opacity="0.33" fill="#f9555a"><polygon points="153.46,89.22 153.87,84.84 149.22,85.20 148.95,87.99"/><circle cx="153.66" cy="87.03" r="2.20"/><circle cx="149.09" cy="86.60" r="1.40"/></g><g opacity="0.40" fill="#f9555a"><polygon points="153.97,76.92 153.65,72.53 149.12,73.65 149.32,76.45"/><circle cx="153.81" cy="74.72" r="2.20"/><circle cx="149.22" cy="75.05" r="1.40"/></g><g opacity="0.47" fill="#f9555a"><polygon points="152.43,64.69 151.40,60.42 147.11,62.28 147.77,65.00"/><circle cx="151.91" cy="62.55" r="2.20"/><circle cx="147.44" cy="63.64" r="1.40"/></g><g opacity="0.55" fill="#f9555a"><polygon points="148.89,52.89 147.16,48.85 143.25,51.39 144.35,53.97"/><circle cx="148.03" cy="50.87" r="2.20"/><circle cx="143.80" cy="52.68" r="1.40"/></g><g opacity="0.62" fill="#f9555a"><polygon points="143.44,41.84 141.06,38.14 137.63,41.30 139.14,43.66"/><circle cx="142.25" cy="39.99" r="2.20"/><circle cx="138.38" cy="42.48" r="1.40"/></g><g opacity="0.70" fill="#f9555a"><polygon points="136.24,31.85 133.28,28.60 130.41,32.28 132.29,34.35"/><circle cx="134.76" cy="30.22" r="2.20"/><circle cx="131.35" cy="33.32" r="1.40"/></g><g opacity="0.78" fill="#f9555a"><polygon points="127.47,23.19 124.01,20.47 121.80,24.58 124.00,26.31"/><circle cx="125.74" cy="21.83" r="2.20"/><circle cx="122.90" cy="25.45" r="1.40"/></g><g opacity="0.85" fill="#f9555a"><polygon points="117.40,16.11 113.53,14.00 112.03,18.42 114.49,19.76"/><circle cx="115.46" cy="15.05" r="2.20"/><circle cx="113.26" cy="19.09" r="1.40"/></g><g opacity="0.93" fill="#f9555a"><polygon points="106.28,10.79 102.12,9.35 101.38,13.96 104.02,14.87"/><circle cx="104.20" cy="10.07" r="2.20"/><circle cx="102.70" cy="14.42" r="1.40"/></g><g opacity="1.00" fill="#f9555a"><polygon points="94.44,7.39 90.10,6.66 90.13,11.33 92.89,11.79"/><circle cx="92.27" cy="7.02" r="2.20"/><circle cx="91.51" cy="11.56" r="1.40"/></g><g opacity="1.00" fill="#f9555a"><polygon points="82.20,6.00 77.80,6.00 78.60,10.60 81.40,10.60"/><circle cx="80.00" cy="6.00" r="2.20"/><circle cx="80.00" cy="10.60" r="1.40"/></g><g opacity="1.00" fill="#f9555a"><polygon points="69.90,6.66 65.56,7.39 67.11,11.79 69.87,11.33"/><circle cx="67.73" cy="7.02" r="2.20"/><circle cx="68.49" cy="11.56" r="1.40"/></g><g opacity="1.00" fill="#f9555a"><polygon points="57.88,9.35 53.72,10.79 55.98,14.87 58.62,13.96"/><circle cx="55.80" cy="10.07" r="2.20"/><circle cx="57.30" cy="14.42" r="1.40"/></g><g opacity="1.00" fill="#f9555a"><polygon points="46.47,14.00 42.60,16.11 45.51,19.76 47.97,18.42"/><circle cx="44.54" cy="15.05" r="2.20"/><circle cx="46.74" cy="19.09" r="1.40"/></g><g opacity="1.00" fill="#f9555a"><polygon points="35.99,20.47 32.53,23.19 36.00,26.31 38.20,24.58"/><circle cx="34.26" cy="21.83" r="2.20"/><circle cx="37.10" cy="25.45" r="1.40"/></g><g opacity="1.00" fill="#f9555a"><polygon points="26.72,28.60 23.76,31.85 27.71,34.35 29.59,32.28"/><circle cx="25.24" cy="30.22" r="2.20"/><circle cx="28.65" cy="33.32" r="1.40"/></g><g opacity="1.00" fill="#f9555a"><polygon points="18.94,38.14 16.56,41.84 20.86,43.66 22.37,41.30"/><circle cx="17.75" cy="39.99" r="2.20"/><circle cx="21.62" cy="42.48" r="1.40"/></g><g opacity="1.00" fill="#f9555a"><polygon points="12.84,48.85 11.11,52.89 15.65,53.97 16.75,51.39"/><circle cx="11.97" cy="50.87" r="2.20"/><circle cx="16.20" cy="52.68" r="1.40"/></g><g opacity="1.00" fill="#f9555a"><polygon points="8.60,60.42 7.57,64.69 12.23,65.00 12.89,62.28"/><circle cx="8.09" cy="62.55" r="2.20"/><circle cx="12.56" cy="63.64" r="1.40"/></g><g opacity="1.00" fill="#f9555a"><polygon points="6.35,72.53 6.03,76.92 10.68,76.45 10.88,73.65"/><circle cx="6.19" cy="74.72" r="2.20"/><circle cx="10.78" cy="75.05" r="1.40"/></g><g opacity="1.00" fill="#f9555a"><polygon points="6.13,84.84 6.54,89.22 11.05,87.99 10.78,85.20"/><circle cx="6.34" cy="87.03" r="2.20"/><circle cx="10.91" cy="86.60" r="1.40"/></g><g opacity="1.00" fill="#f9555a"><polygon points="7.95,97.03 9.09,101.28 13.33,99.31 12.60,96.61"/><circle cx="8.52" cy="99.15" r="2.20"/><circle cx="12.96" cy="97.96" r="1.40"/></g></svg><div class="num">5<span>家</span></div><div class="pill" style="left:201px;background:#ffe9e9;color:#f9555a">信用较<span>差</span>客户</div><div class="pct">占总信用控制客户：45.45%</div></div>
<div class="abs" style="left:47px;top:334px;width:1589px;height:0;border-top:1px dashed #d9d9d9"></div>
<div class="sec" style="left:47px"><div class="badge" style="background:#f96969"><svg class="abs" style="left:5px;top:4px" width="16" height="16" viewBox="0 0 16 16"><circle cx="8" cy="8" r="6.5" fill="none" stroke="#fff" stroke-width="1.8"/><path d="M5.4 4.4L8 7.4l2.6-3M8 7.4V12M5.5 7.7h5M5.5 9.7h5" fill="none" stroke="#fff" stroke-width="1.4"/></svg><span>超额</span></div><h3>超信用额度客户</h3><em style="left:206px">TOP5</em></div>
<div class="sec" style="left:858px"><div class="badge" style="background:#f7a429"><svg class="abs" style="left:5px;top:4px" width="16" height="16" viewBox="0 0 16 16"><circle cx="8" cy="8" r="6.5" fill="none" stroke="#fff" stroke-width="1.8"/><path d="M8 4v4.3l2.8 1.8" fill="none" stroke="#fff" stroke-width="1.6"/></svg><span>超期</span></div><h3>超期应收款</h3><em style="left:170px">TOP5</em></div>
<div class="tbl" style="left:48px"><div class="th"><span style="left:14px">顺序</span><i style="left:55px"></i><span style="left:70px">结算客户</span><i style="left:446px"></i><span style="left:460px">超信用额度</span></div><div class="tr" style="top:36px"><div class="no">1</div><div class="sub" style="left:71px">信用占用额:  94477636.20   信用额度:  100.00</div><div class="val" style="left:461px">94477536.20</div><div class="gap" style="left:55px"></div><div class="gap" style="left:445.5px"></div></div><div class="tr" style="top:90px"><div class="no">2</div><div class="sub" style="left:71px">信用占用额:  9162221.78   信用额度:  100.00</div><div class="val" style="left:461px">9162121.78</div><div class="gap" style="left:55px"></div><div class="gap" style="left:445.5px"></div></div><div class="tr" style="top:144px"><div class="no">3</div><div class="sub" style="left:71px">信用占用额:  6831697.32   信用额度:  0.00</div><div class="val" style="left:461px">6831697.32</div><div class="gap" style="left:55px"></div><div class="gap" style="left:445.5px"></div></div><div class="tr" style="top:198px"><div class="no">4</div><div class="sub" style="left:71px">信用占用额:  810580.52   信用额度:  100.00</div><div class="val" style="left:461px">810480.52</div><div class="gap" style="left:55px"></div><div class="gap" style="left:445.5px"></div></div><div class="tr" style="top:252px"><div class="no">5</div><div class="sub" style="left:71px">信用占用额:  810000.00   信用额度:  100.00</div><div class="val" style="left:461px">809900.00</div><div class="gap" style="left:55px"></div><div class="gap" style="left:445.5px"></div></div></div>
<div class="tbl" style="left:859px"><div class="th"><span style="left:14px">顺序</span><i style="left:55px"></i><span style="left:70px">结算客户</span><i style="left:445px"></i><span style="left:460px">应收账龄最长天数</span></div><div class="tr" style="top:36px"><div class="no">1</div><div class="sub" style="left:71px">到期未收款日期:  2019.11.01 -- 2023.06.06</div><div class="val" style="left:461px">1313天</div><div class="gap" style="left:55px"></div><div class="gap" style="left:445.5px"></div></div><div class="tr" style="top:90px"><div class="no">2</div><div class="sub" style="left:71px">到期未收款日期:  2019.11.01 -- 2023.06.06</div><div class="val" style="left:461px">1313天</div><div class="gap" style="left:55px"></div><div class="gap" style="left:445.5px"></div></div><div class="tr" style="top:144px"><div class="no">3</div><div class="sub" style="left:71px">到期未收款日期:  2019.11.01 -- 2023.06.06</div><div class="val" style="left:461px">1313天</div><div class="gap" style="left:55px"></div><div class="gap" style="left:445.5px"></div></div><div class="tr" style="top:198px"><div class="no">4</div><div class="sub" style="left:71px">到期未收款日期:  2020.05.12 -- 2023.06.06</div><div class="val" style="left:461px">1120天</div><div class="gap" style="left:55px"></div><div class="gap" style="left:445.5px"></div></div><div class="tr" style="top:252px"><div class="no">5</div><div class="sub" style="left:71px">到期未收款日期:  2020.07.04 -- 2023.06.06</div><div class="val" style="left:461px">1067天</div><div class="gap" style="left:55px"></div><div class="gap" style="left:445.5px"></div></div></div>
<div class="mz" style="left:116.0px;top:441.0px;width:66.0px;height:29.0px;border-radius:14px 30px 16px 14px/14px 18px 16px 14px;transform:rotate(-4deg)"><i style="left:0.0px;top:0;width:11.5px;height:17.3px;background:#f6f6f6"></i><i style="left:0.0px;top:17.0px;width:11.5px;height:12.0px;background:#e8e8e8"></i><i style="left:11.0px;top:0;width:18.5px;height:17.3px;background:#efefef"></i><i style="left:11.0px;top:17.0px;width:18.5px;height:12.0px;background:#cdcdcd"></i><i style="left:29.0px;top:0;width:18.5px;height:17.3px;background:#eeeeee"></i><i style="left:29.0px;top:17.0px;width:18.5px;height:12.0px;background:#d5d5d5"></i><i style="left:47.0px;top:0;width:18.5px;height:17.3px;background:#ececec"></i><i style="left:47.0px;top:17.0px;width:18.5px;height:12.0px;background:#e6e6e6"></i><i style="left:65.0px;top:0;width:1.5px;height:17.3px;background:#ececec"></i><i style="left:65.0px;top:17.0px;width:1.5px;height:12.0px;background:#e6e6e6"></i></div><div class="mz" style="left:110.0px;top:495.0px;width:101.0px;height:30.0px;border-radius:16px 40px 18px 15px/15px 16px 16px 15px;transform:rotate(-3deg)"><i style="left:0.0px;top:0;width:17.5px;height:17.3px;background:#f5f5f5"></i><i style="left:0.0px;top:17.0px;width:17.5px;height:13.0px;background:#e4e4e4"></i><i style="left:17.0px;top:0;width:18.5px;height:17.3px;background:#e8e8e8"></i><i style="left:17.0px;top:17.0px;width:18.5px;height:13.0px;background:#c8c8c8"></i><i style="left:35.0px;top:0;width:18.5px;height:17.3px;background:#f0f0f0"></i><i style="left:35.0px;top:17.0px;width:18.5px;height:13.0px;background:#dadada"></i><i style="left:53.0px;top:0;width:18.5px;height:17.3px;background:#efefef"></i><i style="left:53.0px;top:17.0px;width:18.5px;height:13.0px;background:#cccccc"></i><i style="left:71.0px;top:0;width:18.5px;height:17.3px;background:#e8e8e8"></i><i style="left:71.0px;top:17.0px;width:18.5px;height:13.0px;background:#dfdfdf"></i><i style="left:89.0px;top:0;width:12.5px;height:17.3px;background:#f8f8f8"></i><i style="left:89.0px;top:17.0px;width:12.5px;height:13.0px;background:#f4f4f4"></i></div><div class="mz" style="left:109.0px;top:553.0px;width:31.0px;height:27.0px;border-radius:12px 14px 14px 14px/12px 16px 13px 13px"><i style="left:0.0px;top:0;width:18.5px;height:12.8px;background:#f5f5f5"></i><i style="left:0.0px;top:12.5px;width:18.5px;height:14.5px;background:#f1f1f1"></i><i style="left:18.0px;top:0;width:13.5px;height:12.8px;background:#f4f4f4"></i><i style="left:18.0px;top:12.5px;width:13.5px;height:14.5px;background:#efefef"></i></div><div class="mz" style="left:109.0px;top:606.0px;width:80.0px;height:26.0px;border-radius:10px 12px 22px 12px/10px 10px 14px 12px"><i style="left:0.0px;top:0;width:18.5px;height:14.3px;background:#f2f2f2"></i><i style="left:0.0px;top:14.0px;width:18.5px;height:12.0px;background:#ebebeb"></i><i style="left:18.0px;top:0;width:18.5px;height:14.3px;background:#e6e6e6"></i><i style="left:18.0px;top:14.0px;width:18.5px;height:12.0px;background:#cfcfcf"></i><i style="left:36.0px;top:0;width:18.5px;height:14.3px;background:#efefef"></i><i style="left:36.0px;top:14.0px;width:18.5px;height:12.0px;background:#e9e9e9"></i><i style="left:54.0px;top:0;width:18.5px;height:14.3px;background:#eeeeee"></i><i style="left:54.0px;top:14.0px;width:18.5px;height:12.0px;background:#e2e2e2"></i><i style="left:72.0px;top:0;width:8.5px;height:14.3px;background:#fafafa"></i><i style="left:72.0px;top:14.0px;width:8.5px;height:12.0px;background:#f8f8f8"></i></div><div class="mz" style="left:109.0px;top:657.0px;width:73.0px;height:32.0px;border-radius:26px 30px 14px 12px/20px 22px 14px 12px;transform:rotate(3deg)"><i style="left:0.0px;top:0;width:18.5px;height:17.3px;background:#f7f7f7"></i><i style="left:0.0px;top:17.0px;width:18.5px;height:15.0px;background:#e8e8e8"></i><i style="left:18.0px;top:0;width:18.5px;height:17.3px;background:#e8e8e8"></i><i style="left:18.0px;top:17.0px;width:18.5px;height:15.0px;background:#cbcbcb"></i><i style="left:36.0px;top:0;width:18.5px;height:17.3px;background:#eeeeee"></i><i style="left:36.0px;top:17.0px;width:18.5px;height:15.0px;background:#dedede"></i><i style="left:54.0px;top:0;width:18.5px;height:17.3px;background:#f9f9f9"></i><i style="left:54.0px;top:17.0px;width:18.5px;height:15.0px;background:#efefef"></i><i style="left:72.0px;top:0;width:1.5px;height:17.3px;background:#f9f9f9"></i><i style="left:72.0px;top:17.0px;width:1.5px;height:15.0px;background:#efefef"></i></div><div class="mz" style="left:919.0px;top:445.0px;width:43.0px;height:31.0px;border-radius:16px 14px 18px 14px/14px 12px 18px 14px;transform:rotate(-6deg)"><i style="left:0.0px;top:0;width:18.5px;height:12.8px;background:#f4f4f4"></i><i style="left:0.0px;top:12.5px;width:18.5px;height:18.5px;background:#e9e9e9"></i><i style="left:18.0px;top:0;width:18.5px;height:12.8px;background:#ececec"></i><i style="left:18.0px;top:12.5px;width:18.5px;height:18.5px;background:#cfcfcf"></i><i style="left:36.0px;top:0;width:7.5px;height:12.8px;background:#f6f6f6"></i><i style="left:36.0px;top:12.5px;width:7.5px;height:18.5px;background:#f0f0f0"></i></div><div class="mz" style="left:923.0px;top:497.0px;width:120.0px;height:32.0px;border-radius:18px 50px 24px 16px/16px 18px 16px 16px;transform:rotate(-4deg)"><i style="left:0.0px;top:0;width:14.5px;height:15.3px;background:#f6f6f6"></i><i style="left:0.0px;top:15.0px;width:14.5px;height:17.0px;background:#f0f0f0"></i><i style="left:14.0px;top:0;width:18.5px;height:15.3px;background:#e6e6e6"></i><i style="left:14.0px;top:15.0px;width:18.5px;height:17.0px;background:#d6d6d6"></i><i style="left:32.0px;top:0;width:18.5px;height:15.3px;background:#e9e9e9"></i><i style="left:32.0px;top:15.0px;width:18.5px;height:17.0px;background:#d8d8d8"></i><i style="left:50.0px;top:0;width:18.5px;height:15.3px;background:#ececec"></i><i style="left:50.0px;top:15.0px;width:18.5px;height:17.0px;background:#d0d0d0"></i><i style="left:68.0px;top:0;width:18.5px;height:15.3px;background:#e8e8e8"></i><i style="left:68.0px;top:15.0px;width:18.5px;height:17.0px;background:#cbcbcb"></i><i style="left:86.0px;top:0;width:18.5px;height:15.3px;background:#efefef"></i><i style="left:86.0px;top:15.0px;width:18.5px;height:17.0px;background:#eaeaea"></i><i style="left:104.0px;top:0;width:16.5px;height:15.3px;background:#fbfbfb"></i><i style="left:104.0px;top:15.0px;width:16.5px;height:17.0px;background:#f6f6f6"></i></div><div class="mz" style="left:925.0px;top:555.0px;width:56.0px;height:29.0px;border-radius:18px 22px 18px 14px/16px 14px 16px 14px;transform:rotate(-6deg)"><i style="left:0.0px;top:0;width:12.5px;height:10.8px;background:#f6f6f6"></i><i style="left:0.0px;top:10.5px;width:12.5px;height:18.5px;background:#e6e6e6"></i><i style="left:12.0px;top:0;width:18.5px;height:10.8px;background:#ececec"></i><i style="left:12.0px;top:10.5px;width:18.5px;height:18.5px;background:#c4c4c4"></i><i style="left:30.0px;top:0;width:18.5px;height:10.8px;background:#f0f0f0"></i><i style="left:30.0px;top:10.5px;width:18.5px;height:18.5px;background:#e6e6e6"></i><i style="left:48.0px;top:0;width:8.5px;height:10.8px;background:#fafafa"></i><i style="left:48.0px;top:10.5px;width:8.5px;height:18.5px;background:#f1f1f1"></i></div><div class="mz" style="left:926.0px;top:611.0px;width:55.0px;height:25.0px;border-radius:16px 18px 16px 14px/13px 12px 14px 12px"><i style="left:0.0px;top:0;width:11.5px;height:9.3px;background:#f5f5f5"></i><i style="left:0.0px;top:9.0px;width:11.5px;height:16.0px;background:#ebebeb"></i><i style="left:11.0px;top:0;width:18.5px;height:9.3px;background:#e9e9e9"></i><i style="left:11.0px;top:9.0px;width:18.5px;height:16.0px;background:#d0d0d0"></i><i style="left:29.0px;top:0;width:18.5px;height:9.3px;background:#eeeeee"></i><i style="left:29.0px;top:9.0px;width:18.5px;height:16.0px;background:#d6d6d6"></i><i style="left:47.0px;top:0;width:8.5px;height:9.3px;background:#fafafa"></i><i style="left:47.0px;top:9.0px;width:8.5px;height:16.0px;background:#f0f0f0"></i></div><div class="mz" style="left:924.0px;top:661.0px;width:57.0px;height:25.0px;border-radius:16px 16px 16px 14px/13px 13px 13px 12px"><i style="left:0.0px;top:0;width:13.5px;height:13.3px;background:#f7f7f7"></i><i style="left:0.0px;top:13.0px;width:13.5px;height:12.0px;background:#efefef"></i><i style="left:13.0px;top:0;width:18.5px;height:13.3px;background:#e6e6e6"></i><i style="left:13.0px;top:13.0px;width:18.5px;height:12.0px;background:#d2d2d2"></i><i style="left:31.0px;top:0;width:18.5px;height:13.3px;background:#f3f3f3"></i><i style="left:31.0px;top:13.0px;width:18.5px;height:12.0px;background:#ececec"></i><i style="left:49.0px;top:0;width:8.5px;height:13.3px;background:#fbfbfb"></i><i style="left:49.0px;top:13.0px;width:8.5px;height:12.0px;background:#f3f3f3"></i></div>
</div>
<div id="sbar"><svg class="abs" style="left:7px;top:10px" width="11" height="6" viewBox="0 0 11 6"><path d="M0 6L5.5 0L11 6z" fill="#a3a3a3"/></svg><b></b><svg class="abs" style="left:7px;top:730px" width="11" height="6" viewBox="0 0 11 6"><path d="M0 0L5.5 6L11 0z" fill="#505050"/></svg></div>

<div class="abs" style="left:180px;top:902px;width:1740px;height:1px;background:#fafafa"></div>
<div id="botbar"><b style="left:149px;width:66px"></b><b style="left:217px;width:5px"></b><b style="left:1908px;width:1px;background:#8a8a88"></b></div>
</body>
</html>
